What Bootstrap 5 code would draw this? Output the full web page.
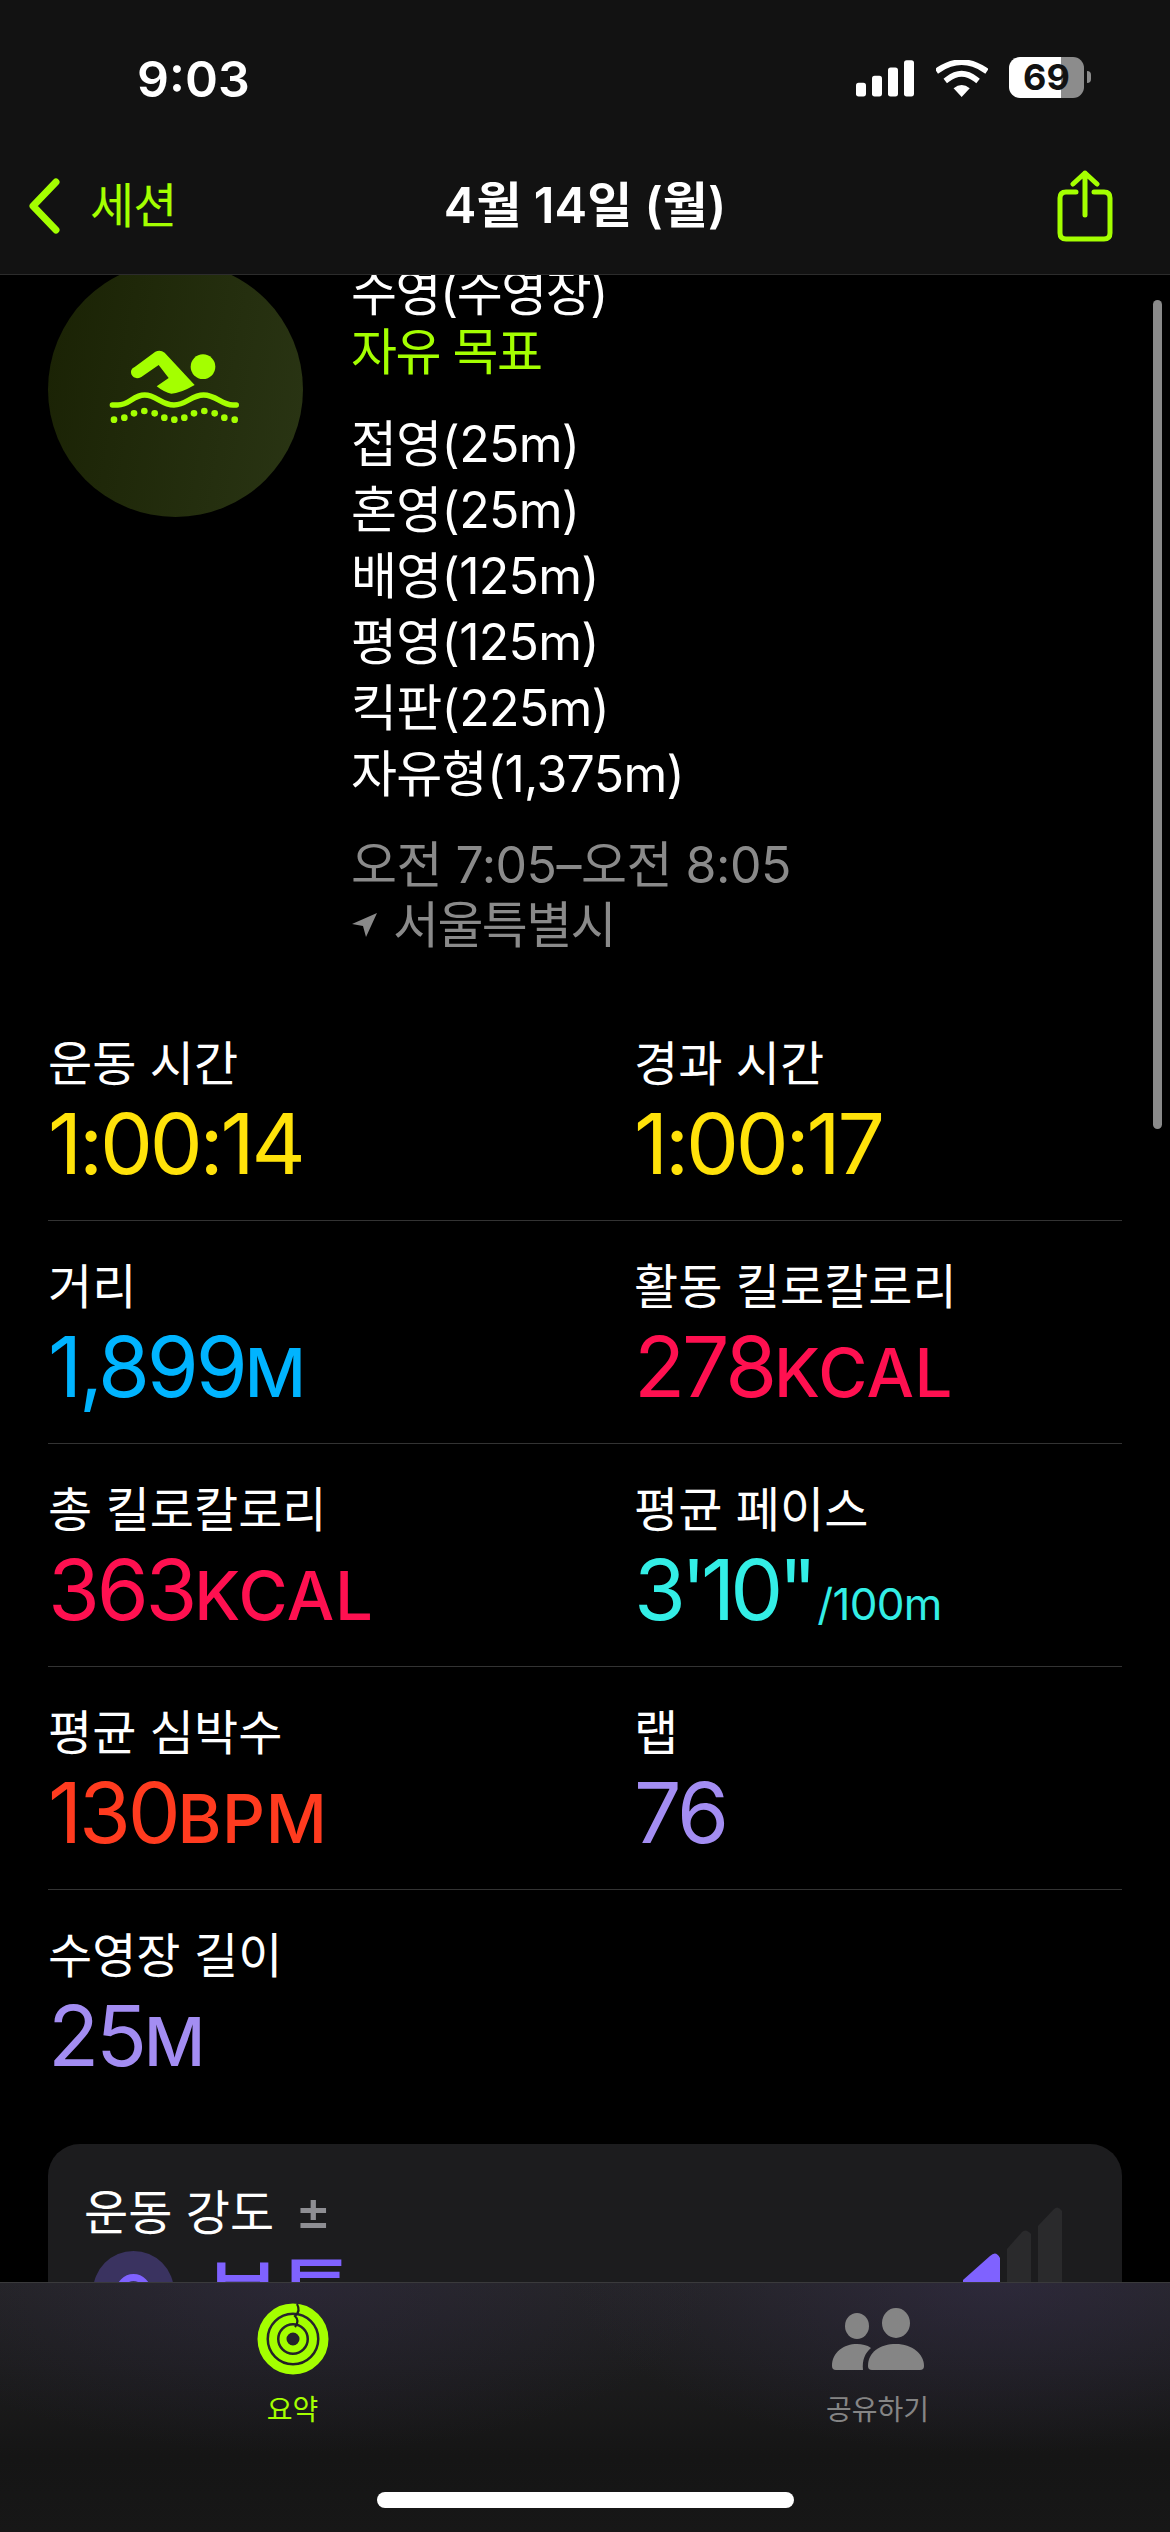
<!DOCTYPE html>
<html lang="ko">
<head>
    <meta charset="UTF-8">
    <meta name="viewport" content="width=device-width, initial-scale=1.0">
    <title>4월 14일 (월)</title>
    <link href="https://cdn.jsdelivr.net/npm/bootstrap@5.3.3/dist/css/bootstrap.min.css" rel="stylesheet">
    <style>
        html, body { background: #000; margin: 0; }
        body { font-family: Inter, "Noto Sans CJK KR", sans-serif; color: #fff; }
        .phone { width: 1170px; height: 2532px; position: relative; overflow: hidden; background: #000; }
        .top-bar { height: 275px; flex: none; background: #121212; border-bottom: 1px solid #2c2c2c; }
        .status-row { height: 156px; padding: 58px 79px 0 137px; }
        .status-icons { margin-top: -1px; }
        .sig-icon, .wifi-icon { margin-top: 3px; }
        .wifi-icon { margin-left: 22px; }
        .clock { font-size: 50px; font-weight: 600; line-height: 42px; }
        .batt { width: 75px; height: 41px; margin-left: 21px; border-radius: 11px; background: linear-gradient(90deg, #fff 69.3%, #8c8c8c 69.3%); color: #121212; font-size: 36px; font-weight: 700; line-height: 41px; text-align: center; }
        .batt-nub { width: 4px; height: 12px; margin: 14px 0 0 3px; background: #8c8c8c; border-radius: 0 4px 4px 0; }
        .nav-row { height: 100px; align-items: center; }
        .nav-left { padding-left: 28px; }
        .nav-right { padding-right: 57px; }
        .lime { color: #a4ff00; }
        .back-label { font-size: 48px; line-height: 60px; margin-left: 28px; letter-spacing: -1px; }
        .nav-title { font-size: 49px; font-weight: 600; line-height: 60px; white-space: nowrap; }
        .scroll-area { flex: 1 1 0; min-height: 0; overflow: hidden; padding: 0 48px; }
        .summary { margin-top: -13px; }
        .swim-disc { width: 255px; height: 255px; flex: none; border-radius: 50%; background: linear-gradient(100deg, #1a2204, #2a3514); margin-right: 48px; }
        .line-a { font-size: 50px; line-height: 60px; letter-spacing: -1.5px; }
        .line-first { padding-top: 1px; margin-bottom: -1px; }
        .sets { margin-top: 29px; font-size: 50px; line-height: 66px; letter-spacing: -.7px; }
        .when { margin-top: 28px; font-size: 50px; line-height: 60px; color: #8a8a8a; letter-spacing: -.5px; }
        .pin-gap { margin-right: 16px; }
        .place { letter-spacing: -1.6px; }
        .stat-row { height: 223px; border-bottom: 1px solid #333; padding-top: 36px; }
        .stat-row.first { margin-top: 43px; }
        .stat-row.last { border-bottom: 0; height: 254px; }
        .stat-right { padding-left: 49px; }
        .stat-label { font-size: 48px; line-height: 60px; }
        .stat-value { font-size: 84px; line-height: 100px; font-weight: 400; letter-spacing: -3.2px; }
        .stat-unit { font-size: 67px; font-weight: 500; letter-spacing: .6px; }
        .stat-pace { letter-spacing: -5px; }
        .stat-small { font-size: 44px; letter-spacing: -.7px; margin-left: 5px; }
        .c-yellow { color: #ffe20a; }
        .c-blue { color: #00b4ff; }
        .c-red { color: #ff1050; }
        .c-cyan { color: #33eee6; }
        .c-orange { color: #ff3b1f; }
        .c-purple { color: #a38df2; }
        .effort { background: #1c1c1e; border-radius: 32px; height: 300px; padding: 37px 36px; }
        .effort-title { font-size: 48px; line-height: 60px; }
        .plusminus { color: #8e8e93; font-size: 54px; font-weight: 500; margin-left: 21px; }
        .effort-dot { width: 81px; height: 81px; border-radius: 50%; background: #3a3360; flex: none; margin-left: 9px; }
        .effort-text { color: #7f62ff; font-size: 80px; font-weight: 500; line-height: 100px; margin-left: 32px; margin-top: -6px; }
        .effort-bars { position: absolute; right: 60px; top: 0; }
        .tab-bar { height: 250px; flex: none; border-top: 1px solid #3a3a3c; background: radial-gradient(ellipse 420px 170px at 85% 0, rgba(60, 50, 90, .4), transparent), radial-gradient(ellipse 420px 170px at 25% 0, rgba(60, 50, 90, .3), transparent), linear-gradient(180deg, #232325, #151515 70%, #171717); }
        .tab-row { padding-top: 20px; }
        .tab-label { font-size: 28px; line-height: 40px; margin-top: 15px; }
        .tab-muted { color: #858585; }
        .home-pill { width: 417px; height: 16px; background: #fff; border-radius: 8px; margin: auto auto 24px; }
        .scroll-thumb { position: absolute; left: 1153px; top: 300px; width: 9px; height: 829px; border-radius: 5px; background: #8a8a8a; }
    </style>
</head>
<body>
    <div class="phone d-flex flex-column">
        <div class="top-bar">
            <div class="status-row d-flex justify-content-between">
                <div class="clock">9:03</div>
                <div class="d-flex align-items-start status-icons">
                    <svg class="sig-icon" width="58" height="37" viewBox="168 88 174 110" fill="#fff">
                        <rect x="168" y="156" width="30" height="41" rx="8"/>
                        <rect x="216" y="135" width="30" height="62" rx="8"/>
                        <rect x="264" y="110" width="30" height="87" rx="8"/>
                        <rect x="312" y="88" width="30" height="109" rx="8"/>
                    </svg>
                    <svg class="wifi-icon" width="52" height="37" viewBox="408 88 154 110">
                        <path d="M416 117Q484 72 552 117" fill="none" stroke="#fff" stroke-width="17" stroke-linecap="square"/>
                        <path d="M442 145Q484 113 526 145" fill="none" stroke="#fff" stroke-width="17" stroke-linecap="square"/>
                        <path d="M484 198L460 172Q484 152 508 172Z" fill="#fff"/>
                    </svg>
                    <div class="batt">69</div>
                    <div class="batt-nub"></div>
                </div>
            </div>
            <div class="row g-0 nav-row">
                <div class="col-4 d-flex align-items-center lime nav-left">
                    <svg width="34" height="58" viewBox="0 0 34 58" fill="none" stroke="#a4ff00" stroke-width="7" stroke-linecap="round" stroke-linejoin="round"><path d="M28 5L5 29L28 53"/></svg>
                    <span class="back-label">세션</span>
                </div>
                <div class="col-4 text-center nav-title">4월 14일 (월)</div>
                <div class="col-4 d-flex justify-content-end nav-right">
                    <svg width="56" height="72" viewBox="0 0 56 72" fill="none" stroke="#a4ff00" stroke-width="5" stroke-linecap="round" stroke-linejoin="round">
                        <path d="M19 22H9Q3 22 3 28V63Q3 69 9 69H47Q53 69 53 63V28Q53 22 47 22H37"/>
                        <path d="M28 45V3M16 14L28 3L40 14"/>
                    </svg>
                </div>
            </div>
        </div>

        <div class="scroll-area">
            <div class="summary d-flex">
                <div class="swim-disc">
                    <svg width="255" height="255" viewBox="55 3 765 765" fill="#a4ff00">
                        <path d="M377 272Q392 265 405 275L495 372Q450 398 425 398Q405 395 381 376L417 351L387 312L335 348Q315 358 305 340Q300 325 315 318Z"/>
                        <circle cx="520" cy="317" r="37"/>
                        <path d="M248 432H265C300 432 310 402 345 402C380 402 395 432 433 432C470 432 485 402 522 402C560 402 575 432 610 432H620" fill="none" stroke="#a4ff00" stroke-width="16" stroke-linecap="round"/>
                        <circle cx="253" cy="476" r="10"/><circle cx="284" cy="470" r="10"/><circle cx="313" cy="457" r="10"/><circle cx="344" cy="450" r="10"/><circle cx="375" cy="457" r="10"/><circle cx="404" cy="470" r="10"/><circle cx="434" cy="476" r="10"/><circle cx="464" cy="470" r="10"/><circle cx="493" cy="457" r="10"/><circle cx="524" cy="450" r="10"/><circle cx="555" cy="457" r="10"/><circle cx="584" cy="470" r="10"/><circle cx="615" cy="476" r="10"/>
                    </svg>
                </div>
                <div>
                    <div class="line-a line-first">수영(수영장)</div>
                    <div class="line-a lime">자유 목표</div>
                    <div class="sets">
                        <div>접영(25m)</div>
                        <div>혼영(25m)</div>
                        <div>배영(125m)</div>
                        <div>평영(125m)</div>
                        <div>킥판(225m)</div>
                        <div>자유형(1,375m)</div>
                    </div>
                    <div class="when">
                        <div>오전 7:05–오전 8:05</div>
                        <div class="d-flex align-items-center">
                            <svg class="pin-gap" width="26" height="26" viewBox="0 0 26 26" fill="#8a8a8a"><path d="M26 1L15 25L12 14L1 12Z"/></svg>
                            <span class="place">서울특별시</span>
                        </div>
                    </div>
                </div>
            </div>

            <div class="row g-0 stat-row first">
                <div class="col-6"><div class="stat-label">운동 시간</div><div class="stat-value c-yellow">1:00:14</div></div>
                <div class="col-6 stat-right"><div class="stat-label">경과 시간</div><div class="stat-value c-yellow">1:00:17</div></div>
            </div>
            <div class="row g-0 stat-row">
                <div class="col-6"><div class="stat-label">거리</div><div class="stat-value c-blue">1,899<span class="stat-unit">M</span></div></div>
                <div class="col-6 stat-right"><div class="stat-label">활동 킬로칼로리</div><div class="stat-value c-red">278<span class="stat-unit">KCAL</span></div></div>
            </div>
            <div class="row g-0 stat-row">
                <div class="col-6"><div class="stat-label">총 킬로칼로리</div><div class="stat-value c-red">363<span class="stat-unit">KCAL</span></div></div>
                <div class="col-6 stat-right"><div class="stat-label">평균 페이스</div><div class="stat-value stat-pace c-cyan">3'10"<span class="stat-small">/100m</span></div></div>
            </div>
            <div class="row g-0 stat-row">
                <div class="col-6"><div class="stat-label">평균 심박수</div><div class="stat-value c-orange">130<span class="stat-unit">BPM</span></div></div>
                <div class="col-6 stat-right"><div class="stat-label">랩</div><div class="stat-value c-purple">76</div></div>
            </div>
            <div class="row g-0 stat-row last">
                <div class="col-6"><div class="stat-label">수영장 길이</div><div class="stat-value c-purple">25<span class="stat-unit">M</span></div></div>
            </div>

            <div class="effort position-relative">
                <div class="effort-title">운동 강도<span class="plusminus">±</span></div>
                <div class="d-flex align-items-start mt-2">
                    <div class="effort-dot">
                        <svg width="81" height="81" viewBox="0 0 81 81" fill="none" stroke="#7f62ff" stroke-width="7"><circle cx="40.5" cy="40.5" r="14"/></svg>
                    </div>
                    <div class="effort-text">보통</div>
                </div>
                <svg class="effort-bars" width="100" height="300" viewBox="0 0 100 300">
                    <path d="M1 300V136L28 112Q34 106 38 114V300Z" fill="#7f62ff"/>
                    <path d="M45 300V105L60 88Q64 84 69 90V300Z" fill="#2a2a2c"/>
                    <path d="M76 300V82L92 65Q96 61 100 67V300Z" fill="#2a2a2c"/>
                </svg>
            </div>
        </div>

        <div class="tab-bar d-flex flex-column">
            <div class="row g-0 text-center tab-row">
                <div class="col-6">
                    <svg width="72" height="72" viewBox="0 0 72 72" fill="none" stroke="#a4ff00" class="d-block mx-auto">
                        <circle cx="36" cy="36" r="31" stroke-width="9"/>
                        <circle cx="36" cy="36" r="20" stroke-width="8"/>
                        <circle cx="36" cy="36" r="10" stroke-width="7"/>
                        <path d="M40 1Q44 8 38 13Q43 18 38 24" stroke="#1f1f20" stroke-width="2.2"/>
                    </svg>
                    <div class="tab-label lime">요약</div>
                </div>
                <div class="col-6">
                    <svg width="96" height="72" viewBox="828 2303 96 72" fill="#858585" class="d-block mx-auto">
                        <ellipse cx="894" cy="2323" rx="14" ry="15"/>
                        <ellipse cx="855" cy="2326" rx="12" ry="13"/>
                        <path d="M866 2366C866 2352 878 2344 894 2344C910 2344 922 2354 922 2366Q922 2370 918 2370H870Q866 2370 866 2366Z"/>
                        <path d="M830 2366C830 2352 842 2344 855 2344C860 2344 865 2345 869 2348C863 2353 860 2360 861 2370H834Q830 2370 830 2366Z"/>
                    </svg>
                    <div class="tab-label tab-muted">공유하기</div>
                </div>
            </div>
            <div class="home-pill"></div>
        </div>

        <div class="scroll-thumb"></div>
    </div>
    <script src="https://cdn.jsdelivr.net/npm/bootstrap@5.3.3/dist/js/bootstrap.bundle.min.js"></script>
</body>
</html>
